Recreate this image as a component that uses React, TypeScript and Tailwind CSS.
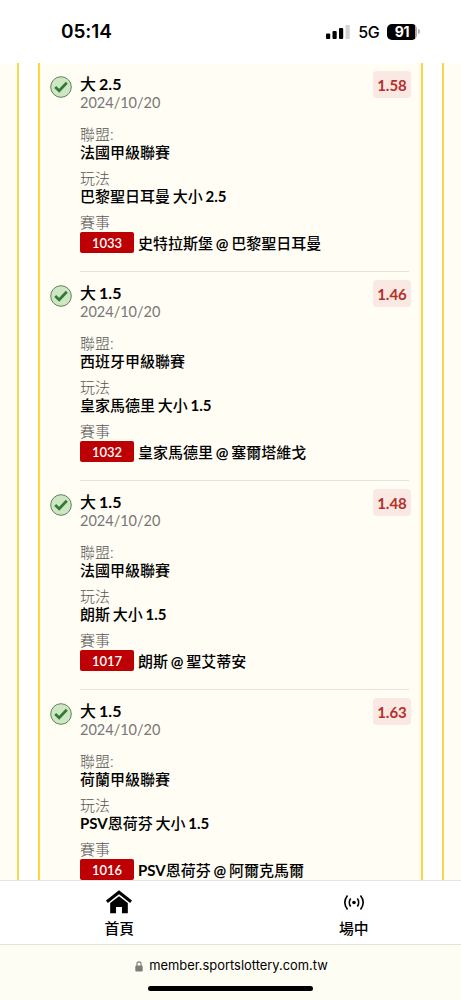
type Bet = {
  pick: string;
  odds: string;
  league: string;
  play: string;
  code: string;
  match: string;
};

const bets: Bet[] = [
  { pick: '大 2.5', odds: '1.58', league: '法國甲級聯賽', play: '巴黎聖日耳曼 大小 2.5', code: '1033', match: '史特拉斯堡 @ 巴黎聖日耳曼' },
  { pick: '大 1.5', odds: '1.46', league: '西班牙甲級聯賽', play: '皇家馬德里 大小 1.5', code: '1032', match: '皇家馬德里 @ 塞爾塔維戈' },
  { pick: '大 1.5', odds: '1.48', league: '法國甲級聯賽', play: '朗斯 大小 1.5', code: '1017', match: '朗斯 @ 聖艾蒂安' },
  { pick: '大 1.5', odds: '1.63', league: '荷蘭甲級聯賽', play: 'PSV恩荷芬 大小 1.5', code: '1016', match: 'PSV恩荷芬 @ 阿爾克馬爾' },
];

function StatusBar() {
  return (
    <header className="flex h-[63px] shrink-0 items-center bg-white pl-[61px] pr-[41px] font-['Inter',sans-serif] text-black">
      <span className="text-[19px] font-semibold leading-none tracking-[-0.1px]">05:14</span>
      <div className="ml-auto flex items-center">
        <svg width="24" height="16" viewBox="0 0 24 16">
          <rect x="0" y="9.5" width="4.2" height="5.5" rx="1" />
          <rect x="6.5" y="7" width="4.2" height="8" rx="1" />
          <rect x="13" y="4" width="4.2" height="11" rx="1" />
          <rect x="19.5" y="1" width="4.2" height="14" rx="1" fill="#d2d2d2" />
        </svg>
        <span className="ml-[8px] text-[16px] font-medium leading-none tracking-[-0.6px]">5G</span>
        <div className="ml-[8px] flex h-[16px] w-[30px] items-center justify-center rounded-[5px] bg-[linear-gradient(90deg,#000_93%,#aaa_93%)] text-[14px] font-bold leading-none tracking-[-0.3px] text-white">
          91
        </div>
        <div className="ml-px h-[5px] w-[2px] rounded-r-full bg-[#b5b5b5]" />
      </div>
    </header>
  );
}

function CheckBadge() {
  return (
    <svg className="mt-[13px] shrink-0" width="22" height="22" viewBox="0 0 22 22" fill="none">
      <circle cx="11" cy="11" r="10.3" fill="#cde6c3" stroke="#5d8556" />
      <path d="M5.2 11 9.2 14.800 16.800 6.800" stroke="#347a34" strokeWidth="2.7" />
    </svg>
  );
}

// Latin letters and digits are set bolder than the Chinese around them
function Mixed({ text }: { text: string }) {
  return (
    <>
      {text.split(/([A-Z0-9.@]+)/).map((part, i) =>
        i % 2 ? (
          <span key={i} className="font-bold">{part}</span>
        ) : (
          part
        )
      )}
    </>
  );
}

function BetRow({ bet }: { bet: Bet }) {
  return (
    <article className="flex h-[209px] shrink-0 pl-[10px] pr-[9px]">
      <CheckBadge />
      <div className="relative ml-[8px] mr-[3px] flex-1 border-b border-[#e4e3dc] pt-[12px] text-[15px] font-medium leading-[18px] text-black [word-spacing:-1px]">
        <h2 className="h-[18px] text-[16px]"><Mixed text={bet.pick} /></h2>
        <p className="mt-px h-[18px] text-[14.5px] font-normal text-[#777]">2024/10/20</p>
        <p className="mt-[13px] h-[18px] font-light text-[#555]">聯盟:</p>
        <p className="h-[18px]">{bet.league}</p>
        <p className="mt-[8px] h-[18px] font-light text-[#555]">玩法</p>
        <p className="h-[18px]"><Mixed text={bet.play} /></p>
        <p className="mt-[8px] h-[18px] font-light text-[#555]">賽事</p>
        <div className="mt-px flex h-[21px] items-center whitespace-nowrap">
          <span className="mr-[4px] flex h-[21px] w-[54px] items-center justify-center rounded-[2px] bg-[#bd0003] text-[13px] font-semibold text-white">
            {bet.code}
          </span>
          <span><Mixed text={bet.match} /></span>
        </div>
        <span className="absolute right-[-2px] top-[8px] flex h-[27px] w-[38px] items-center justify-center rounded-[4px] bg-[#fae8e2] text-[15px] font-bold text-[#b5302a]">
          {bet.odds}
        </span>
      </div>
    </article>
  );
}

function TabBar() {
  return (
    <nav className="grid h-[65px] shrink-0 grid-cols-2 border-y border-[#e4e4e4] bg-white text-[14.8px] font-medium leading-[18px] text-black">
      <a className="flex flex-col items-center pl-[8px] pt-[8px]">
        <svg width="26" height="26" viewBox="0 0 28 26">
          <path d="M1 12.7 14 2.500 27 12.7" fill="none" stroke="currentColor" strokeWidth="3.2" />
          <path d="M4.5 14.2 14 6.9l9.5 7.3V25h-6.300v-6.500h-6.400V25H4.500z" />
        </svg>
        <span className="mt-[4px]">首頁</span>
      </a>
      <a className="flex flex-col items-center pl-[16px] pt-[8px]">
        <svg width="22" height="26" viewBox="0 0 22 26" fill="none" stroke="currentColor" strokeWidth="1.6">
          <circle cx="11" cy="13.500" r="1.8" fill="currentColor" stroke="none" />
          <path d="M7.700 9.500Q4.800 13.500 7.700 17.500M14.300 9.500Q17.200 13.500 14.300 17.500" />
          <path d="M4.500 6.500Q-.9 13.500 4.500 20.500M17.500 6.500Q22.900 13.500 17.500 20.500" />
        </svg>
        <span className="mt-[4px]">場中</span>
      </a>
    </nav>
  );
}

function AddressBar() {
  return (
    <footer className="flex h-[55px] shrink-0 flex-col items-center bg-[#fefdf4] pt-[13px] font-['Inter',sans-serif]">
      <div className="flex h-[16px] items-center pl-[2px] text-[12.9px] text-black">
        <svg className="mr-[6px]" width="8" height="11" viewBox="0 0 8 11" fill="none">
          <rect x=".3" y="4.500" width="7.400" height="6" rx="1.200" fill="#7d7d7a" />
          <path d="M1.900 5V3a2.100 2.100 0 0 1 4.200 0v2" stroke="#7d7d7a" strokeWidth="1.100" />
        </svg>
        member.sportslottery.com.tw
      </div>
      <div className="mt-[12px] h-[5px] w-[165px] rounded-full bg-black" />
    </footer>
  );
}

export default function App() {
  return (
    <div className="flex h-[1000px] w-[461px] flex-col overflow-hidden bg-white font-['Lato','Noto_Sans_CJK_TC',sans-serif]">
      <StatusBar />
      <main className="flex h-[817px] shrink-0 overflow-hidden bg-[#fffdf4]">
        <div className="ml-[17px] flex w-[427px] border-x-2 border-[#f3da50] bg-white px-[19px]">
          <section className="flex flex-1 flex-col border-x-2 border-[#fcd53f] bg-[#fffdf4]">
            {bets.map((bet) => (
              <BetRow key={bet.code} bet={bet} />
            ))}
          </section>
        </div>
      </main>
      <TabBar />
      <AddressBar />
    </div>
  );
}
